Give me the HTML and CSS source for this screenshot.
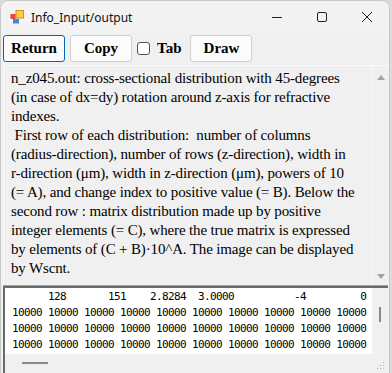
FILE: index.html
```html
<!DOCTYPE html>
<html lang="en">
<head>
    <meta charset="UTF-8">
    <title>Info_Input/output</title>
    <link rel="stylesheet" href="styles.css">
</head>
<body>
    <div class="window">
        <div class="titlebar">
            <svg class="app-icon" width="14" height="14" viewBox="0 0 14 14">
                <rect x="6" y="0.5" width="7.5" height="7.5" fill="#f7d046" stroke="#d88a1c"/>
                <rect x="0.5" y="4" width="5" height="5" fill="#e0463a"/>
                <rect x="3" y="9" width="6" height="4.5" fill="#4a86d8"/>
            </svg>
            <span class="title">Info_Input/output</span>
            <div class="caption-btns">
                <svg width="12" height="12" viewBox="0 0 12 12"><line x1="1" y1="6.5" x2="11" y2="6.5" stroke="#222" stroke-width="1"/></svg>
                <svg width="12" height="12" viewBox="0 0 12 12"><rect x="1.5" y="1.5" width="9" height="9" rx="1.5" fill="none" stroke="#222" stroke-width="1"/></svg>
                <svg width="12" height="12" viewBox="0 0 12 12"><path d="M1 1 L11 11 M11 1 L1 11" stroke="#222" stroke-width="1"/></svg>
            </div>
        </div>

        <div class="toolbar">
            <button class="btn focused">Return</button>
            <button class="btn">Copy</button>
            <label class="check"><span class="box"></span>Tab</label>
            <button class="btn">Draw</button>
        </div>

        <div class="info-box">
            <div class="info-text">
                n_z045.out: cross-sectional distribution with 45-degrees<br>
                (in case of dx=dy) rotation around z-axis for refractive<br>
                indexes.<br>
                &nbsp;First row of each distribution:&nbsp;&nbsp;number of columns<br>
                (radius-direction), number of rows (z-direction), width in<br>
                r-direction (μm), width in z-direction (μm), powers of 10<br>
                (= A), and change index to positive value (= B). Below the<br>
                second row : matrix distribution made up by positive<br>
                integer elements (= C), where the true matrix is expressed<br>
                by elements of (C + B)·10^A. The image can be displayed<br>
                by Wscnt.
            </div>
            <div class="vscroll">
                <span class="arrow up"></span>
                <span class="arrow down"></span>
            </div>
        </div>

        <div class="data-box">
<pre class="data">      128       151    2.8284  3.0000          -4         0
10000 10000 10000 10000 10000 10000 10000 10000 10000 10000
10000 10000 10000 10000 10000 10000 10000 10000 10000 10000
10000 10000 10000 10000 10000 10000 10000 10000 10000 10000</pre>
            <div class="data-vscroll"><span class="thumb-v"></span></div>
            <div class="data-hscroll"><span class="thumb-h"></span></div>
            <div class="grip">
                <svg width="8" height="8" viewBox="0 0 8 8" fill="#b0b0b0">
                    <rect x="6" y="0" width="1" height="1"/>
                    <rect x="3" y="3" width="1" height="1"/><rect x="6" y="3" width="1" height="1"/>
                    <rect x="0" y="6" width="1" height="1"/><rect x="3" y="6" width="1" height="1"/><rect x="6" y="6" width="1" height="1"/>
                </svg>
            </div>
        </div>
    </div>
</body>
</html>
```

FILE: styles.css
```css
body {
    margin: 0;
    background-color: #dcdcdc;
    overflow: hidden;
}
.window {
    width: 388px;
    height: 373px;
    background-color: #f0f0f0;
    border: 1px solid #c8c8c8;
    border-bottom: none;
    border-radius: 8px 8px 0 0;
    overflow: hidden;
    display: flex;
    flex-direction: column;
}
.titlebar {
    height: 32px;
    display: flex;
    align-items: center;
    background-color: #f3f3f3;
    font-family: "Noto Sans", sans-serif;
    font-size: 12px;
    color: #111;
}
.app-icon {
    margin-left: 9px;
    margin-right: 7px;
}
.title {
    flex: 1;
}
.caption-btns {
    display: flex;
    gap: 33px;
    margin-right: 16px;
}
.toolbar {
    display: flex;
    align-items: center;
    height: 27px;
    padding: 2px 2px 0 2px;
    margin-bottom: 3px;
}
.btn {
    width: 62px;
    height: 27px;
    margin-right: 5px;
    background-color: #fbfbfb;
    border: 1px solid #d0d0d0;
    border-radius: 3px;
    font-family: "Liberation Serif", serif;
    font-weight: bold;
    font-size: 15px;
    color: #000;
    padding: 0;
}
.btn.focused {
    border-color: #0067c0;
}
.check {
    display: flex;
    align-items: center;
    font-family: "Liberation Serif", serif;
    font-weight: bold;
    font-size: 15px;
    margin-right: 9px;
}
.box {
    width: 11px;
    height: 11px;
    border: 1px solid #555;
    border-radius: 3px;
    background-color: #fff;
    margin-right: 7px;
}
.info-box {
    display: flex;
    margin-left: 2px;
    width: 385px;
    height: 219px;
    border-top: 1px solid #fafafa;
    border-left: 1px solid #f8f8f8;
}
.info-text {
    flex: 1;
    padding: 3px 0 0 7px;
    font-family: "Liberation Serif", serif;
    font-size: 15px;
    letter-spacing: -0.15px;
    line-height: 19px;
    color: #000;
    white-space: nowrap;
    overflow: hidden;
}
.vscroll {
    width: 17px;
    border-left: 1px solid #f8f8f8;
    display: flex;
    flex-direction: column;
    justify-content: space-between;
    align-items: center;
    padding: 9px 0 6px 0;
}
.arrow {
    width: 0;
    height: 0;
    border-left: 4px solid transparent;
    border-right: 4px solid transparent;
}
.arrow.up {
    border-bottom: 5px solid #a3a3a3;
}
.arrow.down {
    border-top: 5px solid #a3a3a3;
}
.data-box {
    flex: 1;
    margin-left: 2px;
    width: 385px;
    display: grid;
    grid-template-columns: 1fr 16px;
    grid-template-rows: 1fr 20px;
    border-top: 1px solid #a0a0a0;
}
.data {
    margin: 0;
    background-color: #fff;
    border-top: 2px solid #6a6a6a;
    border-left: 2px solid #6a6a6a;
    padding: 1px 0 0 7px;
    font-family: "DejaVu Sans Mono", monospace;
    font-size: 11px;
    letter-spacing: -0.62px;
    line-height: 16px;
    color: #000;
    overflow: hidden;
}
.data-vscroll {
    border-top: 2px solid #6a6a6a;
    background-color: #f0f0f0;
    position: relative;
}
.thumb-v {
    position: absolute;
    left: 7px;
    top: 19px;
    width: 2px;
    height: 15px;
    background-color: #8a8a8a;
}
.data-hscroll {
    border-left: 2px solid #6a6a6a;
    background-color: #f0f0f0;
    position: relative;
}
.thumb-h {
    position: absolute;
    left: 17px;
    top: 8px;
    width: 26px;
    height: 2px;
    background-color: #8a8a8a;
}
.grip {
    display: flex;
    align-items: flex-end;
    justify-content: flex-end;
    padding: 0 3px 4px 0;
}
```
